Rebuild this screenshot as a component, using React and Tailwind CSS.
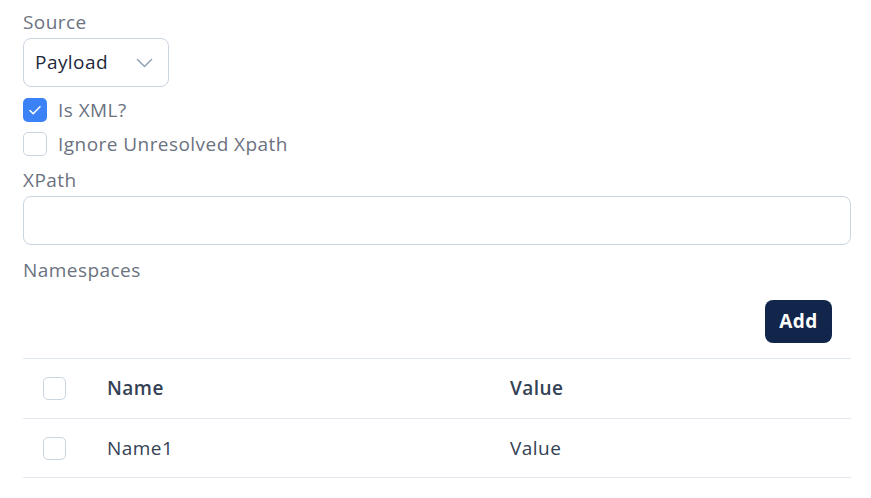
import React from "react";

function Check({ checked }) {
  return checked ? (
    <span className="flex h-6 w-6 shrink-0 items-center justify-center rounded-[5px] bg-[#3b82f6]">
      <svg width="16" height="16" viewBox="0 0 16 16" fill="none">
        <path d="M3 8.5l3.2 3.2L13 4.8" stroke="white" strokeWidth="1.6" strokeLinecap="round" strokeLinejoin="round" />
      </svg>
    </span>
  ) : (
    <span className="block h-6 w-6 shrink-0 rounded-[5px] border border-[#cbd5e1] bg-white" />
  );
}

export default function App() {
  return (
    <div
      className="w-[871px] h-[498px] bg-white pl-[23px] pr-[20px] pt-2 text-[19px] tracking-[0.45px] text-[#6b7280]"
      style={{ fontFamily: '"Open Sans", "Liberation Sans", sans-serif' }}
    >
      <div className="h-7 leading-7">Source</div>
      <div className="mt-[2px] flex h-[49px] w-[146px] items-center justify-between rounded-lg border border-[#cbd5e1] pl-[11px] pr-[15px] text-[#1e293b]">
        <span>Payload</span>
        <svg width="17" height="10" viewBox="0 0 17 10" fill="none">
          <path d="M1.5 1.5l7 7 7-7" stroke="#94a3b8" strokeWidth="1.6" strokeLinecap="round" strokeLinejoin="round" />
        </svg>
      </div>
      <div className="mt-[9px] flex h-7 items-center gap-[11px]">
        <Check checked />
        <span>Is XML?</span>
      </div>
      <div className="mt-[6px] flex h-7 items-center gap-[11px]">
        <Check />
        <span>Ignore Unresolved Xpath</span>
      </div>
      <div className="mt-2 h-7 leading-7">XPath</div>
      <div className="mt-[2px] h-[49px] w-full rounded-lg border border-[#cbd5e1]" />
      <div className="mt-[11px] h-7 leading-7">Namespaces</div>
      <div className="mt-4 flex justify-end pr-[19px]">
        <button className="h-[43px] w-[67px] rounded-lg bg-[#11264a] font-bold text-white">Add</button>
      </div>
      <table className="mt-[15px] w-full border-collapse text-[#334155]">
        <tbody>
          <tr className="h-[60px] border-y border-[#e2e8f0]">
            <td className="w-[84px] pl-5 align-middle">
              <span className="block h-[23px] w-[23px] rounded-[5px] border border-[#cbd5e1]" />
            </td>
            <td className="w-[403px] font-semibold">Name</td>
            <td className="font-semibold">Value</td>
          </tr>
          <tr className="h-[59px] border-b border-[#e2e8f0]">
            <td className="pl-5 align-middle">
              <span className="block h-[23px] w-[23px] rounded-[5px] border border-[#cbd5e1]" />
            </td>
            <td>Name1</td>
            <td>Value</td>
          </tr>
        </tbody>
      </table>
    </div>
  );
}
